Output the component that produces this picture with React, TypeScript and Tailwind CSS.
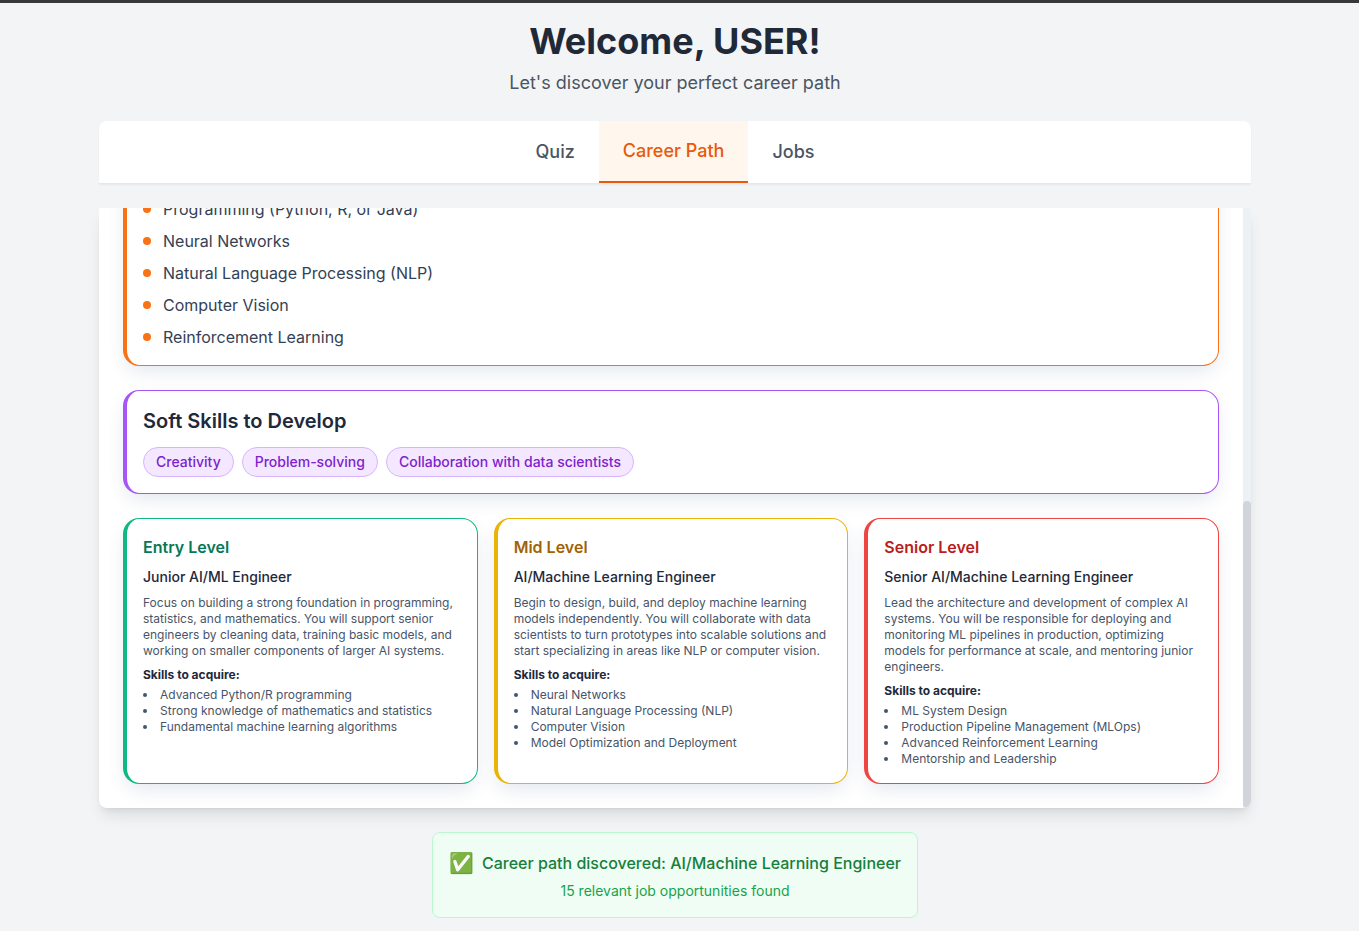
import React from "react";

const tabs = ["Quiz", "Career Path", "Jobs"];

const technicalSkills = [
  "Programming (Python, R, or Java)",
  "Neural Networks",
  "Natural Language Processing (NLP)",
  "Computer Vision",
  "Reinforcement Learning",
];

const softSkills = ["Creativity", "Problem-solving", "Collaboration with data scientists"];

interface Level {
  name: string;
  role: string;
  summary: string;
  skills: string[];
  border: string;
  title: string;
}

const levels: Level[] = [
  {
    name: "Entry Level",
    role: "Junior AI/ML Engineer",
    summary:
      "Focus on building a strong foundation in programming, statistics, and mathematics. You will support senior engineers by cleaning data, training basic models, and working on smaller components of larger AI systems.",
    skills: [
      "Advanced Python/R programming",
      "Strong knowledge of mathematics and statistics",
      "Fundamental machine learning algorithms",
    ],
    border: "border-[#10b981]",
    title: "text-[#047857]",
  },
  {
    name: "Mid Level",
    role: "AI/Machine Learning Engineer",
    summary:
      "Begin to design, build, and deploy machine learning models independently. You will collaborate with data scientists to turn prototypes into scalable solutions and start specializing in areas like NLP or computer vision.",
    skills: [
      "Neural Networks",
      "Natural Language Processing (NLP)",
      "Computer Vision",
      "Model Optimization and Deployment",
    ],
    border: "border-[#eab308]",
    title: "text-[#a16207]",
  },
  {
    name: "Senior Level",
    role: "Senior AI/Machine Learning Engineer",
    summary:
      "Lead the architecture and development of complex AI systems. You will be responsible for deploying and monitoring ML pipelines in production, optimizing models for performance at scale, and mentoring junior engineers.",
    skills: [
      "ML System Design",
      "Production Pipeline Management (MLOps)",
      "Advanced Reinforcement Learning",
      "Mentorship and Leadership",
    ],
    border: "border-[#ef4444]",
    title: "text-[#b91c1c]",
  },
];

function Card({ border, children }: { border: string; children: React.ReactNode }) {
  return (
    <section
      className={`shrink-0 rounded-2xl border border-l-4 bg-white p-4 shadow-[0_8px_20px_-4px_rgba(30,64,120,0.14)] ${border}`}
    >
      {children}
    </section>
  );
}

function LevelCard({ level }: { level: Level }) {
  return (
    <Card border={level.border}>
      <h3 className={`mb-2 text-base font-semibold ${level.title}`}>{level.name}</h3>
      <h4 className="mb-2 text-sm font-medium text-[#1e293b]">{level.role}</h4>
      <p className="mb-2 text-xs text-[#475569]">{level.summary}</p>
      <p className="mb-1 text-xs font-bold text-[#1e293b]">Skills to acquire:</p>
      <ul className="list-inside list-disc text-xs text-[#475569]">
        {level.skills.map((skill) => (
          <li key={skill}>{skill}</li>
        ))}
      </ul>
    </Card>
  );
}

export default function App() {
  return (
    <div className="min-h-screen border-t-3 border-[#383838] bg-[#f3f4f6] pr-[33px] pb-3 pl-6 font-['Inter','Liberation_Sans',sans-serif]">
      <div className="mx-auto max-w-6xl">
        <header className="pt-[18px] pb-6 text-center">
          <h1 className="mb-2 text-4xl font-bold text-[#1f2937]">Welcome, USER!</h1>
          <p className="text-lg/7 text-[#4b5563]">Let's discover your perfect career path</p>
        </header>

        <nav className="mb-6 flex justify-center rounded-t-lg border-b border-[#e5e7eb] bg-white shadow-[0_1px_2px_rgba(0,0,0,0.05)]">
          {tabs.map((tab) => (
            <button
              key={tab}
              type="button"
              className={
                tab === "Career Path"
                  ? "border-b-2 border-[#ea580c] bg-[#fff7ed] px-6 py-4 text-lg/7 font-medium text-[#ea580c]"
                  : "px-6 py-4 text-lg/7 font-medium text-[#4b5563]"
              }
            >
              {tab}
            </button>
          ))}
        </nav>

        <main className="flex h-[600px] overflow-hidden rounded-b-lg bg-white shadow-lg">
          <div className="flex min-w-0 flex-1 flex-col justify-end gap-6 overflow-hidden p-6">
            <Card border="border-[#f97316]">
              <ul className="space-y-2 pt-12">
                {technicalSkills.map((skill) => (
                  <li key={skill} className="flex items-center gap-3 text-base text-[#334155]">
                    <span className="size-2 rounded-full bg-[#f97316]" />
                    {skill}
                  </li>
                ))}
              </ul>
            </Card>

            <Card border="border-[#a855f7]">
              <h2 className="mb-3 text-xl font-semibold text-[#1e293b]">Soft Skills to Develop</h2>
              <div className="flex flex-wrap gap-2">
                {softSkills.map((skill) => (
                  <span
                    key={skill}
                    className="rounded-full border border-[#d8b4fe] bg-[#f3e8ff] px-3 py-1 text-sm font-medium text-[#7e22ce]"
                  >
                    {skill}
                  </span>
                ))}
              </div>
            </Card>

            <div className="grid shrink-0 grid-cols-3 gap-4">
              {levels.map((level) => (
                <LevelCard key={level.name} level={level} />
              ))}
            </div>
          </div>
          <div className="flex w-2 flex-col justify-end bg-[#ebf1f5]">
            <div className="h-[307px] rounded-full bg-[#d1d5db]" />
          </div>
        </main>

        <div className="mt-6 flex justify-center">
          <div role="status" className="rounded-lg border border-[#bbf7d0] bg-[#f0fdf4] p-4 text-center">
            <div className="mb-1 flex items-center justify-center gap-2">
              <span className="text-xl">✅</span>
              <span className="text-base font-medium text-[#15803d]">
                Career path discovered: AI/Machine Learning Engineer
              </span>
            </div>
            <p className="text-sm text-[#16a34a]">15 relevant job opportunities found</p>
          </div>
        </div>
      </div>
    </div>
  );
}
